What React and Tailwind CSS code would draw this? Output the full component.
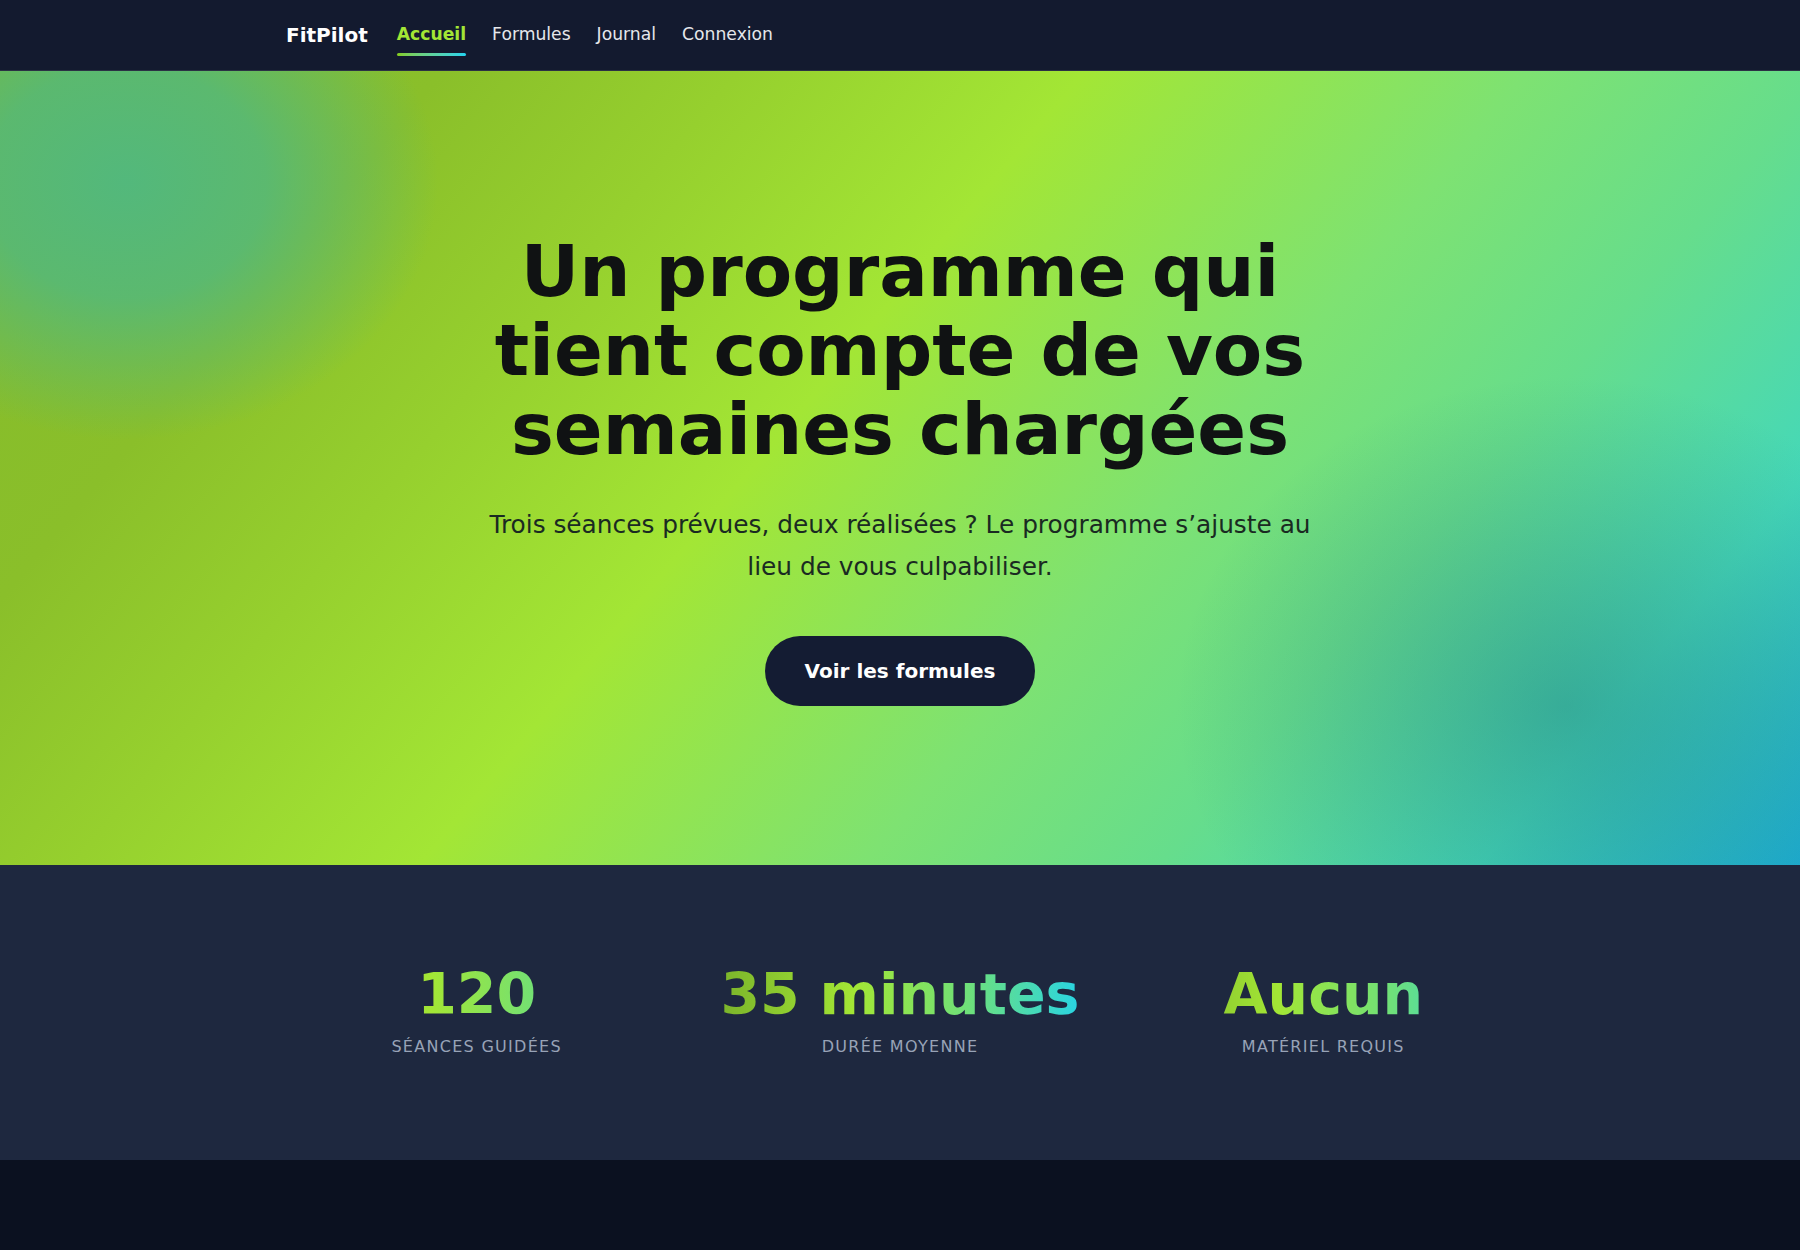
import React from 'react';

const font = "font-['DejaVu_Sans','Liberation_Sans',sans-serif]";

function Nav() {
  return (
    <header className="bg-[#131a2f] border-b border-white/10">
      <div className="max-w-[1228px] mx-auto h-[70px] flex items-center gap-[29px]">
        <span className="text-white font-bold text-[20px]">FitPilot</span>
        <nav className="flex items-center gap-[26px] text-[17.2px]">
          <a href="#" className="relative py-2 font-bold text-[#a3e635]">
            Accueil
            <span className="absolute left-0 right-0 bottom-0 h-[3px] rounded-full bg-gradient-to-r from-[#84cc16] to-[#22d3ee]" />
          </a>
          <a href="#" className="py-2 text-[#e5e7eb]">Formules</a>
          <a href="#" className="py-2 text-[#e5e7eb]">Journal</a>
          <a href="#" className="py-2 text-[#e5e7eb]">Connexion</a>
        </nav>
      </div>
    </header>
  );
}

function Hero() {
  return (
    <section className="pt-[161px] pb-[159px] text-center bg-[radial-gradient(ellipse_400px_330px_at_7%_14%,rgba(80,184,128,0.95)_0%,rgba(80,184,128,0.8)_35%,rgba(80,184,128,0)_78%),radial-gradient(ellipse_520px_440px_at_87%_80%,rgba(24,100,112,0.38),transparent_75%),linear-gradient(130deg,#84bb2c_0%,#8abf2a_18%,#96d02e_30%,#a3e635_44%,#7ee272_62%,#66dd8c_74%,#45d8b8_87%,#1eaed2_100%)]">
      <h1 className="max-w-[900px] mx-auto text-[72px] leading-[1.1] font-bold text-[#101213]">
        Un programme qui tient compte de vos semaines chargées
      </h1>
      <p className="max-w-[850px] mx-auto mt-[34px] text-[24.8px] leading-[1.7] text-[#1a2a22]">
        Trois séances prévues, deux réalisées ? Le programme s’ajuste au lieu de vous culpabiliser.
      </p>
      <a href="#" className="inline-block mt-12 px-10 py-5 rounded-full bg-[#141c33] text-white font-bold text-[20px] leading-[30px]">
        Voir les formules
      </a>
    </section>
  );
}

const stats = [
  { value: '120', label: 'Séances guidées' },
  { value: '35 minutes', label: 'Durée moyenne' },
  { value: 'Aucun', label: 'Matériel requis' },
];

function Stats() {
  return (
    <section className="bg-[#1e283f] py-[101px]">
      <div className="max-w-[1228px] mx-auto grid grid-cols-3 gap-[42px] text-center">
        {stats.map((s) => (
          <div key={s.label}>
            <div className="text-[57px] leading-none font-bold bg-[linear-gradient(90deg,#78b02a_0%,#a3e635_38%,#6ee07a_68%,#22d3ee_100%)] bg-clip-text text-transparent">
              {s.value}
            </div>
            <div className="mt-3 text-base uppercase tracking-[0.08em] text-[#98a3b7]">{s.label}</div>
          </div>
        ))}
      </div>
    </section>
  );
}

export default function App() {
  return (
    <div className={`${font} min-h-screen bg-[#0b1120]`}>
      <Nav />
      <Hero />
      <Stats />
      <footer className="h-[90px] bg-[#0b1120]" />
    </div>
  );
}
